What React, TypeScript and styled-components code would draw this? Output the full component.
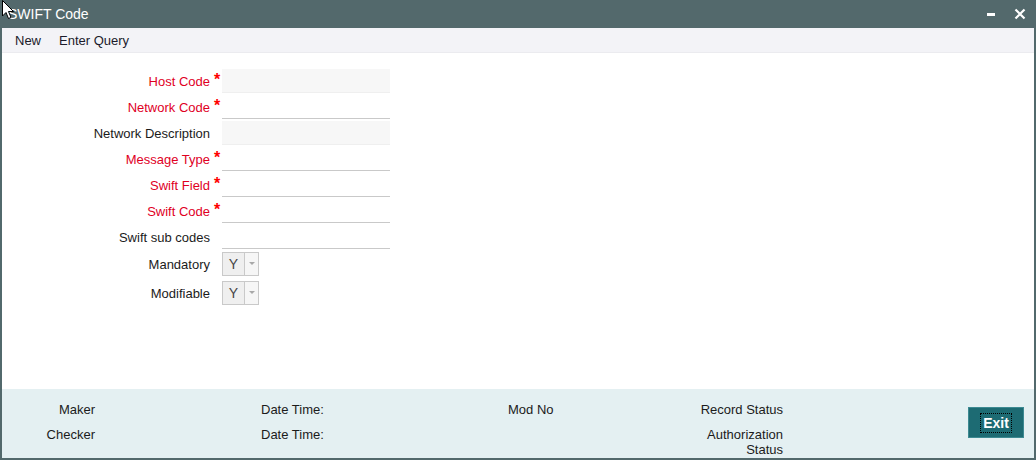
import React from "react";
import styled, { createGlobalStyle } from "styled-components";

const Global = createGlobalStyle`
  html, body { margin: 0; padding: 0; background: #ffffff; }
  body { font-family: "Liberation Sans", Arial, sans-serif; font-size: 13px; color: #1b1b1b; }
  * { box-sizing: border-box; }
`;

const Window = styled.div`
  position: relative;
  width: 1036px;
  height: 460px;
  display: flex;
  flex-direction: column;
  border-left: 2px solid #52696c;
  border-right: 2px solid #52696c;
  border-bottom: 2px solid #52696c;
  background: #ffffff;
`;

const TitleBar = styled.div`
  height: 28px;
  margin: 0 -2px;
  padding: 0 10px 0 8px;
  background: #53696c;
  display: flex;
  align-items: center;
  color: #ffffff;
  font-size: 14px;
  flex-shrink: 0;
`;

const Title = styled.span`
  flex: 1;
`;

const TitleButtons = styled.div`
  display: flex;
  align-items: center;
  gap: 18px;
`;

const Toolbar = styled.div`
  height: 25px;
  background: #f3f3f7;
  border-bottom: 1px solid #ebebef;
  display: flex;
  align-items: center;
  gap: 18px;
  padding-left: 13px;
  flex-shrink: 0;
`;

const ToolItem = styled.span`
  color: #1b1b2b;
  font-size: 13px;
`;

const FormArea = styled.div`
  flex: 1;
  padding-top: 15px;
`;

const Form = styled.div`
  display: grid;
  grid-template-columns: 208px 12px 170px;
`;

const Label = styled.div<{ $required?: boolean; $h?: number }>`
  height: ${(p) => p.$h ?? 26}px;
  display: flex;
  align-items: center;
  justify-content: flex-end;
  color: ${(p) => (p.$required ? "#e0001f" : "#1b1b1b")};
  font-size: 13px;
  white-space: nowrap;
`;

const Star = styled.div<{ $h?: number }>`
  height: ${(p) => p.$h ?? 26}px;
  display: flex;
  align-items: flex-start;
  padding-top: 3px;
  padding-left: 4px;
  color: #ff0000;
  font-size: 16px;
  font-weight: bold;
`;

const FieldCell = styled.div<{ $h?: number }>`
  height: ${(p) => p.$h ?? 26}px;
  display: flex;
  align-items: center;
`;

const Input = styled.div<{ $disabled?: boolean }>`
  width: 168px;
  height: 24px;
  background: ${(p) => (p.$disabled ? "#f7f7f7" : "#ffffff")};
  border-bottom: 1px solid ${(p) => (p.$disabled ? "#efefef" : "#c9c9c9")};
`;

const Select = styled.div`
  width: 37px;
  height: 24px;
  margin-top: -2px;
  display: flex;
  border: 1px solid #c9c9c9;
  background: #efefef;
`;

const SelectValue = styled.span`
  width: 21px;
  display: flex;
  align-items: center;
  justify-content: center;
  font-size: 14px;
  color: #454545;
`;

const SelectArrow = styled.span`
  flex: 1;
  border-left: 1px solid #c9c9c9;
  background: #f6f6f6;
  display: flex;
  align-items: center;
  justify-content: center;
  &::after {
    content: "";
    border-left: 3px solid transparent;
    border-right: 3px solid transparent;
    border-top: 3px solid #a8a8a8;
  }
`;

const Footer = styled.div`
  height: 69px;
  background: #e4f0f2;
  display: flex;
  align-items: center;
  padding-right: 10px;
  flex-shrink: 0;
`;

const AuditGrid = styled.div`
  align-self: flex-start;
  padding-top: 13px;
  display: grid;
  grid-template-columns: 93px 166px 247px 140px 135px;
  row-gap: 10px;
  line-height: 15px;
`;

const AuditCell = styled.div<{ $right?: boolean }>`
  text-align: ${(p) => (p.$right ? "right" : "left")};
  font-size: 13px;
  color: #1b1b1b;
`;

const ExitButton = styled.button`
  margin-left: auto;
  width: 56px;
  height: 31px;
  background: #1d6b73;
  border: 1px solid #3d8a92;
  color: #ffffff;
  font-family: "Liberation Sans", Arial, sans-serif;
  font-weight: bold;
  font-size: 14px;
  padding: 0;
  display: flex;
  align-items: center;
  justify-content: center;
  margin-top: -2px;
`;

const ExitLabel = styled.span`
  outline: 1px dotted #000000;
  padding: 1px 2px;
`;

const Cursor = styled.svg`
  position: absolute;
  left: 0;
  top: 0;
`;

type Row = { label: string; required?: boolean; kind: "input" | "disabled" | "select" };

const rows: Row[] = [
  { label: "Host Code", required: true, kind: "disabled" },
  { label: "Network Code", required: true, kind: "input" },
  { label: "Network Description", kind: "disabled" },
  { label: "Message Type", required: true, kind: "input" },
  { label: "Swift Field", required: true, kind: "input" },
  { label: "Swift Code", required: true, kind: "input" },
  { label: "Swift sub codes", kind: "input" },
  { label: "Mandatory", kind: "select" },
  { label: "Modifiable", kind: "select" },
];

export default function App() {
  return (
    <>
      <Global />
      <Window>
        <TitleBar>
          <Title>SWIFT Code</Title>
          <TitleButtons>
            <svg width="10" height="10" viewBox="0 0 10 10">
              <rect x="1" y="4" width="8" height="3" fill="#ffffff" />
            </svg>
            <svg width="12" height="12" viewBox="0 0 12 12">
              <path d="M1.5 1.5 L10.5 10.5 M10.5 1.5 L1.5 10.5" stroke="#ffffff" strokeWidth="2.2" />
            </svg>
          </TitleButtons>
        </TitleBar>
        <Toolbar>
          <ToolItem>New</ToolItem>
          <ToolItem>Enter Query</ToolItem>
        </Toolbar>
        <FormArea>
          <Form>
            {rows.map((r) => {
              const h = r.kind === "select" ? 29 : 26;
              return (
                <React.Fragment key={r.label}>
                  <Label $required={r.required} $h={h}>{r.label}</Label>
                  <Star $h={h}>{r.required ? "*" : ""}</Star>
                  <FieldCell $h={h}>
                    {r.kind === "select" ? (
                      <Select>
                        <SelectValue>Y</SelectValue>
                        <SelectArrow />
                      </Select>
                    ) : (
                      <Input $disabled={r.kind === "disabled"} />
                    )}
                  </FieldCell>
                </React.Fragment>
              );
            })}
          </Form>
        </FormArea>
        <Footer>
          <AuditGrid>
            <AuditCell $right>Maker</AuditCell>
            <AuditCell />
            <AuditCell>Date Time:</AuditCell>
            <AuditCell>Mod No</AuditCell>
            <AuditCell $right>Record Status</AuditCell>
            <AuditCell $right>Checker</AuditCell>
            <AuditCell />
            <AuditCell>Date Time:</AuditCell>
            <AuditCell />
            <AuditCell $right>
              Authorization
              <br />
              Status
            </AuditCell>
          </AuditGrid>
          <ExitButton>
            <ExitLabel>Exit</ExitLabel>
          </ExitButton>
        </Footer>
        <Cursor width="13" height="20" viewBox="0 0 13 20">
          <path d="M0.5 0.5 L0.5 16 L4 12.5 L6.5 18.5 L9 17.5 L6.5 11.5 L11.5 11.5 Z" fill="#ffffff" stroke="#000000" strokeWidth="1" />
        </Cursor>
      </Window>
    </>
  );
}
